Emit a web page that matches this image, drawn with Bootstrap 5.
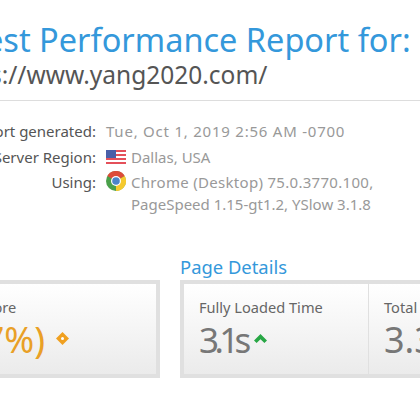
<!DOCTYPE html>
<html lang="en">
<head>
<meta charset="utf-8">
<title>Latest Performance Report</title>
<link href="https://cdn.jsdelivr.net/npm/bootstrap@5.3.0/dist/css/bootstrap.min.css" rel="stylesheet">
<style>
html,body{width:420px;height:403px;overflow:hidden;background:#fff;}
body{font-family:"Noto Sans",sans-serif;color:#555;}
.page-wrap{width:800px;margin-left:-100px;padding-top:21px;}
.rep-title{font-size:32.5px;line-height:38px;color:#3498db;font-weight:400;margin:0 0 0 38px;white-space:nowrap;}
.rep-url{font-size:24.5px;line-height:32px;color:#555;font-weight:400;margin:0 0 0 42px;white-space:nowrap;}
.rep-rule{width:600px;height:1px;background:#ddd;margin-top:9px;}
.info-block{margin-top:19px;font-size:15px;line-height:22px;}
.info-row{display:flex;margin-bottom:3.5px;}
.info-lab{width:196px;text-align:right;color:#555;flex:none;}
.info-val{margin-left:10px;color:#999;display:flex;gap:5px;align-items:flex-start;}
.val-wide{letter-spacing:.77px;}
.val-mid{letter-spacing:.3px;}
.sec-row{display:flex;gap:20px;margin-top:39px;}
.sec-left{width:260px;flex:none;}
.sec-right{flex:1;}
.sec-head{font-size:18.4px;line-height:26px;color:#3498db;height:26px;}
.score-box{border:4px solid #e0e0e0;height:98px;display:flex;background:linear-gradient(#fff,#ebebeb);}
.score-cell{padding:12px 15px 0 15px;border-right:1px solid #e0e0e0;flex:none;}
.score-cell:last-child{border-right:0;}
.score-cell-wide{width:185px;}
.score-cell-first{padding-left:0;margin-left:-6px;}
.score-lab{font-size:14.6px;line-height:22px;color:#666;white-space:nowrap;}
.score-val{font-size:36px;line-height:46px;color:#777;white-space:nowrap;display:flex;align-items:center;gap:7px;margin-top:-1px;}
.score-tight{font-size:35px;letter-spacing:-4.6px;}
.score-shift{margin-left:22px;}
.score-icon{margin-bottom:3px;}
.score-orange{color:#e9a026;}
</style>
</head>
<body>
<div class="page-wrap">
  <h1 class="rep-title">Latest Performance Report for:</h1>
  <h2 class="rep-url">https://www.yang2020.com/</h2>
  <div class="rep-rule"></div>
  <div class="info-block">
    <div class="info-row"><div class="info-lab">Report generated:</div><div class="info-val val-wide">Tue, Oct 1, 2019 2:56 AM -0700</div></div>
    <div class="info-row"><div class="info-lab">Test Server Region:</div><div class="info-val">
      <svg width="20" height="14" viewBox="0 0 20 14" class="mt-1" aria-hidden="true"><rect width="20" height="14" fill="#fff"/><g fill="#e4505a"><rect width="20" height="2"/><rect y="4" width="20" height="2"/><rect y="8" width="20" height="2"/><rect y="12" width="20" height="2"/></g><rect width="10" height="8" fill="#4a5fa8"/></svg>
      <span>Dallas, USA</span></div></div>
    <div class="info-row"><div class="info-lab">Using:</div><div class="info-val">
      <svg width="20" height="20" viewBox="0 0 20 20" class="flex-none" aria-hidden="true"><circle cx="10" cy="10" r="10" fill="#4aa04a"/><path d="M10 10 L1.3 5 A10 10 0 0 1 18.7 5 Z" fill="#dd4b39"/><path d="M10 10 L18.7 5 A10 10 0 0 1 10 20 Z" fill="#f5c92e"/><circle cx="10" cy="10" r="5" fill="#fff"/><circle cx="10" cy="10" r="3.8" fill="#4a84c9"/></svg>
      <span><span class="val-mid">Chrome (Desktop) 75.0.3770.100,</span><br>PageSpeed 1.15-gt1.2, YSlow 3.1.8</span></div></div>
  </div>
  <div class="sec-row">
    <div class="sec-left">
      <div class="sec-head"></div>
      <div class="score-box">
        <div class="score-cell score-cell-first">
          <div class="score-lab">PageSpeed Score</div>
          <div class="score-val score-orange"><span class="score-shift">A (97%)</span><svg class="ms-1 score-icon" width="13" height="13" viewBox="0 0 13 13" aria-hidden="true"><path d="M6.5 0 13 6.5 6.5 13 0 6.5Z" fill="#f0a020"/><circle cx="6.5" cy="6.5" r="1.5" fill="#fff"/></svg></div>
        </div>
      </div>
    </div>
    <div class="sec-right">
      <div class="sec-head">Page Details</div>
      <div class="score-box">
        <div class="score-cell score-cell-wide">
          <div class="score-lab">Fully Loaded Time</div>
          <div class="score-val"><span class="score-tight">3.1s</span><svg class="score-icon" width="13" height="9" viewBox="0 0 13 9" aria-hidden="true"><path d="M0 6.5 6.5 0 13 6.5 10.4 9 6.5 5.2 2.6 9Z" fill="#28a745"/></svg></div>
        </div>
        <div class="score-cell">
          <div class="score-lab">Total Page Size</div>
          <div class="score-val"><span>3.3MB</span></div>
        </div>
      </div>
    </div>
  </div>
</div>
<script src="https://cdn.jsdelivr.net/npm/bootstrap@5.3.0/dist/js/bootstrap.bundle.min.js"></script>
</body>
</html>
